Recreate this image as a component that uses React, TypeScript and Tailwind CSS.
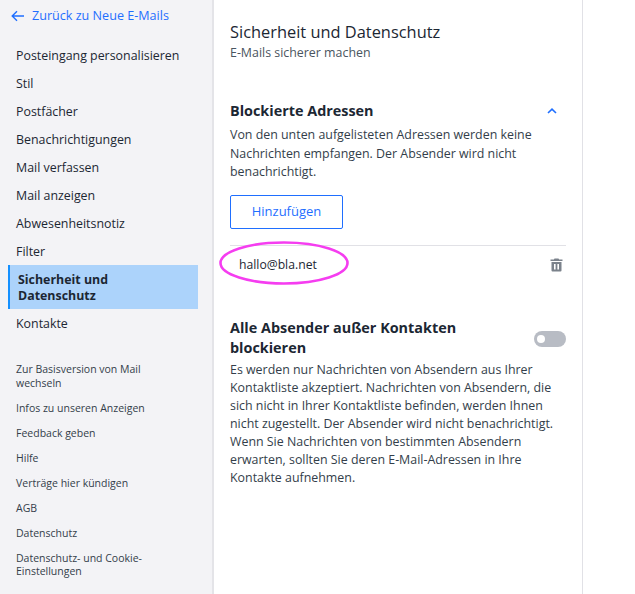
import React from "react";

const mainItems = ["Posteingang personalisieren", "Stil", "Postfächer", "Benachrichtigungen", "Mail verfassen", "Mail anzeigen", "Abwesenheitsnotiz", "Filter"];
const footerItems = ["Infos zu unseren Anzeigen", "Feedback geben", "Hilfe", "Verträge hier kündigen", "AGB", "Datenschutz"];

function Item({ label }: { label: string }) {
  return <div className="h-[28px] pl-[16px] flex items-center text-[12.4px] text-[#1c2733]">{label}</div>;
}

export default function App() {
  return (
    <div className="w-[635px] h-[594px] flex bg-white overflow-hidden font-['Open_Sans',sans-serif]">
      <aside className="w-[214px] shrink-0 bg-[#f3f3f6] border-r-[2px] border-[#e4e4e8] flex flex-col">
        <div className="h-[30px] mt-[1px] pl-[11px] flex items-center gap-[7px] text-[12.6px] text-[#1f6fff]">
          <svg width="14" height="12" viewBox="0 0 14 12" fill="none" stroke="#1f6fff" strokeWidth="1.4">
            <path d="M13 6H1.5M6 1.2L1.2 6 6 10.8" />
          </svg>
          <span>Zurück zu Neue E-Mails</span>
        </div>
        <div className="mt-[11px]">
          {mainItems.map((m) => <Item key={m} label={m} />)}
        </div>
        <div className="mt-[-1px] ml-[8px] w-[190px] h-[44px] bg-[#acd3fb] border-l-[2px] border-[#1490ff] pl-[8px] pt-[2px] flex items-center text-[12.4px] leading-[16px] font-bold text-[#1c2733]">
          <span>Sicherheit und<br />Datenschutz</span>
        </div>
        <div className="mt-[1px]"><Item label="Kontakte" /></div>
        <div className="mt-[24px] pl-[16px] pr-[50px] text-[10.5px] leading-[14px] text-[#333e4a]">
          <div>Zur Basisversion von Mail wechseln</div>
          {footerItems.map((f) => <div key={f} className="mt-[11px]">{f}</div>)}
          <div className="mt-[12px] leading-[13px]">Datenschutz- und Cookie-Einstellungen</div>
        </div>
      </aside>
      <main className="w-[369px] shrink-0 border-r border-[#e1e1e6] pl-[16px] pr-[16px] pt-[21px] text-[#1c2733]">
        <h1 className="text-[16.4px] leading-[22px] font-normal">Sicherheit und Datenschutz</h1>
        <p className="mt-[1px] text-[12.4px] leading-[18px] text-[#4a5560]">E-Mails sicherer machen</p>
        <div className="mt-[38px] flex items-center justify-between pr-[9px]">
          <h2 className="text-[14.4px] leading-[22px] font-bold">Blockierte Adressen</h2>
          <svg width="10" height="6" viewBox="0 0 10 6" fill="none" stroke="#1f6fff" strokeWidth="1.6">
            <path d="M1 5L5 1.2 9 5" />
          </svg>
        </div>
        <p className="mt-[4px] text-[12.4px] leading-[18.5px] text-[#333e4a]">
          Von den unten aufgelisteten Adressen werden keine Nachrichten empfangen. Der Absender wird nicht benachrichtigt.
        </p>
        <button className="mt-[13px] block w-[113px] h-[34px] pt-[1px] border border-[#1f6fff] rounded-[2px] text-[13px] text-[#1f6fff]">Hinzufügen</button>
        <div className="relative mt-[16px] h-[40px] border-t border-[#e1e1e6] flex items-center justify-between pl-[9px] pr-[3px] text-[12.2px]">
          <span className="relative z-10">hallo@bla.net</span>
          <svg width="13" height="14" viewBox="0 0 13 14" fill="#7b828b">
            <path d="M4.5 0.5h4l.6 1H12.5v1.5H.5V1.5h3.4zM1.5 4h10v8.5a1 1 0 0 1-1 1h-8a1 1 0 0 1-1-1zM4 6v5.5h1.6V6zM7.4 6v5.5H9V6z" fillRule="evenodd" />
          </svg>
          <svg className="absolute left-[-13px] top-[-6px]" width="134" height="46" viewBox="0 0 134 46" fill="none">
            <ellipse cx="67" cy="23" rx="63.5" ry="20.5" stroke="#f53df0" strokeWidth="2.6" />
          </svg>
        </div>
        <div className="mt-[33px] flex items-start justify-between">
          <h2 className="w-[260px] text-[14.4px] leading-[20px] font-bold">Alle Absender außer Kontakten blockieren</h2>
          <div className="mt-[13px] w-[32px] h-[16px] rounded-full bg-[#b8bcc4] flex items-center pl-[3px]">
            <div className="w-[8px] h-[8px] rounded-full bg-white" />
          </div>
        </div>
        <p className="mt-[3px] text-[12.4px] leading-[18px] text-[#333e4a]">
          Es werden nur Nachrichten von Absendern aus Ihrer Kontaktliste akzeptiert. Nachrichten von Absendern, die sich nicht in Ihrer Kontaktliste befinden, werden Ihnen nicht zugestellt. Der Absender wird nicht benachrichtigt. Wenn Sie Nachrichten von bestimmten Absendern erwarten, sollten Sie deren E-Mail-Adressen in Ihre Kontakte aufnehmen.
        </p>
      </main>
    </div>
  );
}
